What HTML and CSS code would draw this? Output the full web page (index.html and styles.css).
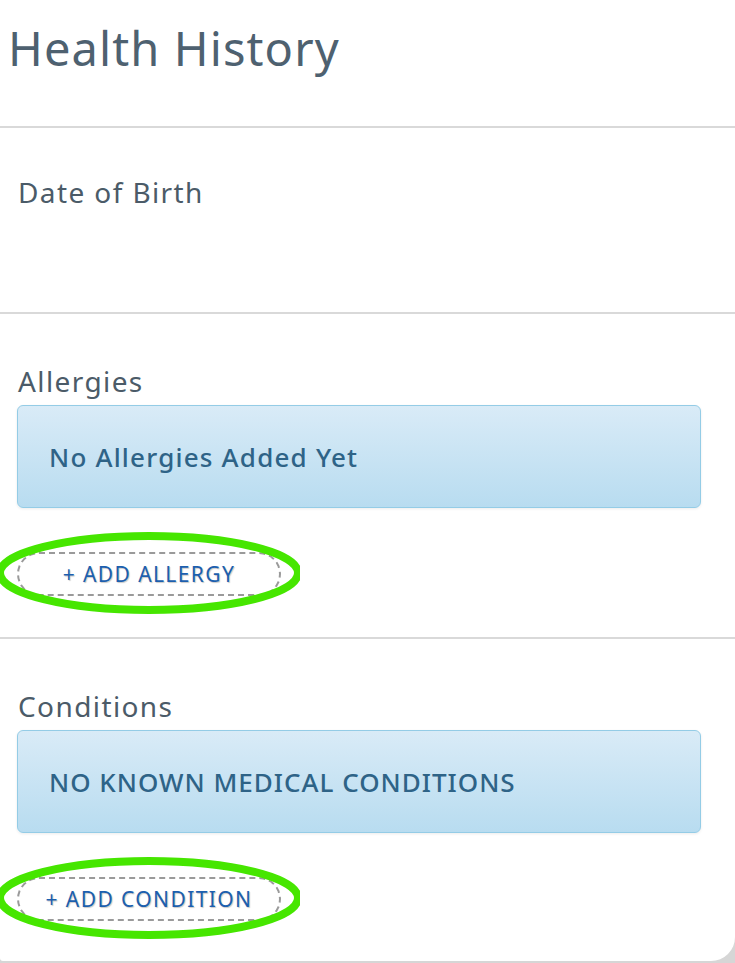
FILE: index.html
```html
<!DOCTYPE html>
<html lang="en">
<head>
  <meta charset="UTF-8" />
  <title>Health History</title>
  <link rel="stylesheet" href="styles.css">
</head>
<body>

<div class="card">

  <div class="card-head">
    <h1>Health History</h1>
  </div>

  <div class="section section-dob">
    <div class="label">Date of Birth</div>
  </div>

  <div class="section">
    <div class="label">Allergies</div>
    <div class="info-box">No Allergies Added Yet</div>
    <div class="add-row">
      <button class="add-btn">+ ADD ALLERGY</button>
      <!-- marcação verde -->
      <svg class="mark" width="320" height="96" viewBox="0 0 320 96">
        <ellipse cx="169" cy="48" rx="149" ry="37" fill="none" stroke="#46e600" stroke-width="8" />
      </svg>
    </div>
  </div>

  <div class="section">
    <div class="label">Conditions</div>
    <div class="info-box upper">NO KNOWN MEDICAL CONDITIONS</div>
    <div class="add-row">
      <button class="add-btn">+ ADD CONDITION</button>
      <svg class="mark" width="320" height="96" viewBox="0 0 320 96">
        <ellipse cx="169" cy="48" rx="149" ry="37" fill="none" stroke="#46e600" stroke-width="8" />
      </svg>
    </div>
  </div>

</div>

</body>
</html>
```

FILE: styles.css
```css
body {
  font-family: "Noto Sans", sans-serif;
  background-color: #d6d6d6;
  margin: 0;
  overflow: hidden;
}
.card {
  background: #fff;
  width: 735px;
  height: 961px;
  border-radius: 0 0 24px 3px;
  overflow: hidden;
}
.card-head {
  height: 126px;
  border-bottom: 2px solid #d9d9d9;
  padding-left: 8px;
}
h1 {
  margin: 0;
  padding-top: 20px;
  font-size: 47px;
  line-height: 56px;
  font-weight: 400;
  letter-spacing: 1.1px;
  color: #4e6170;
}
.section {
  padding: 49px 34px 41px 17px;
  border-bottom: 2px solid #d9d9d9;
}
.section:last-child {
  border-bottom: none;
}
.section-dob {
  height: 186px;
  box-sizing: border-box;
  padding-top: 46px;
}
.label {
  font-size: 28px;
  line-height: 36px;
  letter-spacing: 1.4px;
  color: #4b5b68;
  padding-left: 1px;
}
.info-box {
  margin-top: 6px;
  height: 101px;
  border: 1px solid #94cce6;
  border-radius: 6px;
  background: linear-gradient(#d9ebf7, #b8dcf0);
  box-shadow: 0 1px 3px rgba(0, 0, 0, 0.08);
  padding-left: 31px;
  display: flex;
  align-items: center;
  font-size: 26px;
  font-weight: 500;
  letter-spacing: 1.2px;
  color: #2e6387;
}
.info-box.upper {
  letter-spacing: 1px;
}
.add-row {
  position: relative;
  margin-top: 44px;
  height: 44px;
}
.add-btn {
  height: 44px;
  width: 264px;
  border: 2px dashed #9a9a9a;
  border-radius: 22px;
  background: #fff;
  font-family: "Noto Sans", sans-serif;
  font-size: 21px;
  letter-spacing: 1.4px;
  color: #1c5fae;
  text-shadow: 1px 1px 1px #c8c8c8;
  cursor: pointer;
}
.mark {
  position: absolute;
  left: -37px;
  top: -27px;
}
```
